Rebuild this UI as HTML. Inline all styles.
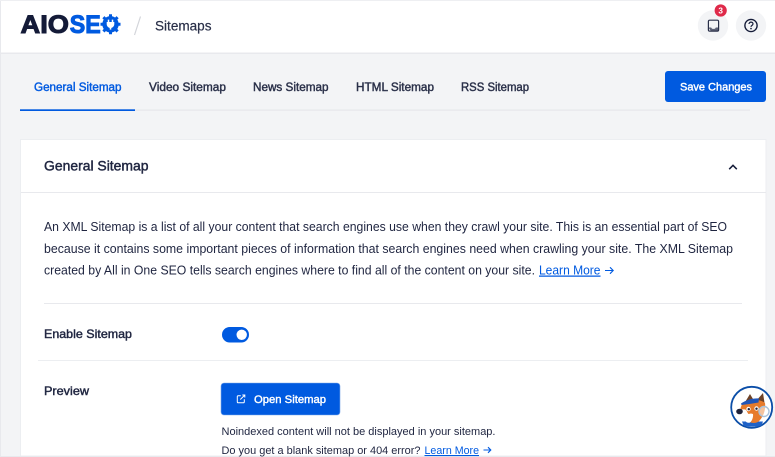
<!DOCTYPE html>
<html lang="en"><head><meta charset="utf-8"><title>Sitemaps</title>
<style>
html,body{margin:0;padding:0;width:775px;height:457px;overflow:hidden;background:#f3f4f6}
svg{display:block}
text{font-family:"Liberation Sans",sans-serif;fill:#141b38}
.b{font-weight:700}
.t{font-size:11.5px;fill:#2a3049;stroke:#2a3049;stroke-width:.42}
.p{font-size:12.5px;fill:#1f2540}
.s{font-size:10.8px;fill:#1f2540}
.l{fill:#005ae0;text-decoration:underline}
.a{fill:none;stroke:#005ae0;stroke-width:1.1}
</style></head><body>
<svg width="775" height="457" viewBox="0 0 775 457" xmlns="http://www.w3.org/2000/svg">
<rect width="775" height="457" fill="#f3f4f6"/>
<rect x="0" y="0" width="1" height="457" fill="#e8e9ed"/>
<!-- header -->
<rect x="1" y="1" width="774" height="52" fill="#fff"/>
<rect x="0" y="0" width="775" height="1" fill="#eeeff2"/>
<rect x="0" y="52.5" width="775" height="1.5" fill="#e8e9ed"/>
<text x="20.5" y="33" font-size="25" class="b" stroke="#141b38" stroke-width="1" textLength="48.5" lengthAdjust="spacingAndGlyphs">AIO</text>
<text x="69.8" y="33" font-size="25" class="b" style="fill:#005ae0" stroke="#005ae0" stroke-width="1" textLength="31" lengthAdjust="spacingAndGlyphs">SE</text>
<circle cx="110.5" cy="24.3" r="8.2" fill="#005ae0"/>
<path d="M110.5 14.3v3M110.5 31.3v3M100.500 24.3h3M117.500 24.3h3M103.400 17.200l2 2M115.600 29.400l2 2M117.600 17.200l-2 2M105.400 29.400l-2 2" stroke="#005ae0" stroke-width="3"/>
<path d="M108.500 19.600v2.400M112.500 19.600v2.400" stroke="#fff" stroke-width="1.500"/>
<path d="M106.700 22h7.600v2.200a3.800 3.800 0 0 1-7.600 0z" fill="#fff"/>
<path d="M110.500 27v2.600" stroke="#fff" stroke-width="1.600"/>
<path d="M140.500 16.500 134.500 35" stroke="#d3d5da" stroke-width="1.200"/>
<text x="155" y="30.500" font-size="13.500" textLength="56.500" lengthAdjust="spacingAndGlyphs" stroke="#2a3049" stroke-width=".2" style="fill:#2a3049">Sitemaps</text>
<!-- header buttons -->
<circle cx="713" cy="25.500" r="15.200" fill="#f3f4f6"/>
<circle cx="751" cy="25.500" r="15.200" fill="#f3f4f6"/>
<rect x="708.400" y="20.200" width="10.200" height="11" rx="1.300" fill="none" stroke="#2a3049" stroke-width="1.200"/>
<path d="M708.400 27.500h2.800c.3 1 1.100 1.400 2.300 1.400s2-.4 2.300-1.400h2.800v2.900a1 1 0 0 1-1 1h-6.200a1 1 0 0 1-1-1z" fill="#2a3049" fill-opacity=".75"/>
<circle cx="720.700" cy="10.500" r="6.100" fill="#df2a4a"/>
<text x="720.700" y="13.400" font-size="8.200" class="b" text-anchor="middle" style="fill:#fff">3</text>
<circle cx="751" cy="25.500" r="6.100" fill="none" stroke="#141b38" stroke-width="1.400"/>
<path d="M749 24c0-1.100.9-1.900 2-1.900s2 .8 2 1.800c0 1.500-2 1.500-2 3" fill="none" stroke="#141b38" stroke-width="1.200"/>
<circle cx="751" cy="28.600" r=".8" fill="#141b38"/>
<!-- tabs -->
<rect x="20" y="109.500" width="730" height="1.200" fill="#e5e7eb"/>
<rect x="20" y="109.300" width="115" height="1.700" fill="#005ae0"/>
<text x="34" y="91" class="t" textLength="87.500" lengthAdjust="spacingAndGlyphs" style="fill:#005ae0;stroke:#005ae0">General Sitemap</text>
<text x="149" y="91" class="t" textLength="77" lengthAdjust="spacingAndGlyphs">Video Sitemap</text>
<text x="253" y="91" class="t" textLength="75.500" lengthAdjust="spacingAndGlyphs">News Sitemap</text>
<text x="356" y="91" class="t" textLength="78" lengthAdjust="spacingAndGlyphs">HTML Sitemap</text>
<text x="461" y="91" class="t" textLength="68" lengthAdjust="spacingAndGlyphs">RSS Sitemap</text>
<rect x="665" y="71" width="101" height="31" rx="3" fill="#005ae0"/>
<text x="680" y="90.500" font-size="11" stroke="#fff" stroke-width=".4" textLength="72" lengthAdjust="spacingAndGlyphs" style="fill:#fff">Save Changes</text>
<!-- card -->
<rect x="20.500" y="139.500" width="745.500" height="316.500" fill="#fff" stroke="#eceef1"/>
<rect x="0" y="456" width="775" height="1" fill="#e8e9ed"/>
<rect x="21" y="192" width="745" height="1" fill="#e8e9ed"/>
<text x="44" y="170.500" font-size="14" stroke="#1f2540" stroke-width=".45" textLength="104.500" lengthAdjust="spacingAndGlyphs" style="fill:#1f2540">General Sitemap</text>
<path d="M729.200 169.200 733 165.300l3.800 3.900" fill="none" stroke="#141b38" stroke-width="1.500"/>
<text x="44" y="231" class="p" textLength="683" lengthAdjust="spacingAndGlyphs">An XML Sitemap is a list of all your content that search engines use when they crawl your site. This is an essential part of SEO</text>
<text x="44" y="253" class="p" textLength="689" lengthAdjust="spacingAndGlyphs">because it contains some important pieces of information that search engines need when crawling your site. The XML Sitemap</text>
<text x="44" y="274.500" class="p" textLength="491" lengthAdjust="spacingAndGlyphs">created by All in One SEO tells search engines where to find all of the content on your site.</text>
<text x="539" y="274.500" class="p l" textLength="61.500" lengthAdjust="spacingAndGlyphs">Learn More</text>
<path class="a" d="M605 270.500h8M610 267.300l3.200 3.200-3.200 3.200"/>
<rect x="44" y="303" width="698" height="1" fill="#e8e9ed"/>
<text x="44" y="338" font-size="11.800" stroke="#1f2540" stroke-width=".42" textLength="88" lengthAdjust="spacingAndGlyphs" style="fill:#1f2540">Enable Sitemap</text>
<rect x="222" y="327" width="27" height="15.500" rx="7.750" fill="#005ae0"/>
<circle cx="241.700" cy="334.800" r="5.200" fill="#fff"/>
<rect x="38" y="360" width="710" height="1" fill="#eceef1"/>
<text x="44" y="395" font-size="11.800" stroke="#1f2540" stroke-width=".42" textLength="45" lengthAdjust="spacingAndGlyphs" style="fill:#1f2540">Preview</text>
<rect x="221" y="383" width="119" height="32" rx="3" fill="#005ae0" stroke="#7fa9ea" stroke-width=".6"/>
<path d="M240.800 395.800h-2.600a.9.9 0 0 0-.9.9v5.200a.9.9 0 0 0 .9.9h5.200a.9.9 0 0 0 .9-.9v-2.600M240.300 399.500l4.200-4.200M242.300 395h2.500v2.500" fill="none" stroke="#fff" stroke-width="1"/>
<text x="254" y="403" font-size="11" stroke="#fff" stroke-width=".4" textLength="72" lengthAdjust="spacingAndGlyphs" style="fill:#fff">Open Sitemap</text>
<text x="221.500" y="435" class="s" textLength="274" lengthAdjust="spacingAndGlyphs">Noindexed content will not be displayed in your sitemap.</text>
<text x="221.500" y="454" class="s" textLength="199" lengthAdjust="spacingAndGlyphs">Do you get a blank sitemap or 404 error?</text>
<text x="424.500" y="454" class="s l" textLength="54.500" lengthAdjust="spacingAndGlyphs">Learn More</text>
<path class="a" d="M483.500 450h7M488 447.200l2.800 2.800-2.800 2.800"/>
<!-- mascot -->
<circle cx="751.700" cy="407.300" r="20.500" fill="#fff" stroke="#0b4ea8" stroke-width="1.800"/>
<path d="M742 421.500h21l-1.500 4c-5 1.500-13 1.500-18 0z" fill="#1e62c8"/>
<path d="M744.500 403l5.500-9 4.500 7.500zM756 401l7-8 2 13z" fill="#6d4227"/>
<path d="M742 404c6-5 17-6 23-1 1 7-2 15-7 19-4 2-9 1-12-3-2-1-5-3-6-6 0-4 1-6 2-9z" fill="#e77b2c"/>
<path d="M737 413c1-3 5-4 8-3.500 2 .5 2 3 3.500 4.500l2.500-.5 2 .5c.5 3-1 7-3 8.500-3 1-5-1-6-4-3 0-6-2-7-5.500z" fill="#fff"/>
<path d="M741 403.500c5-3.500 12-5.500 18-5l-.5 4-9 1.500-8 1z" fill="#2156b8"/>
<ellipse cx="739.500" cy="411.500" rx="3.300" ry="2.800" fill="#20233a"/>
<circle cx="748.500" cy="409" r="2.200" fill="#fff"/><circle cx="748.800" cy="409.200" r="1.200" fill="#20233a"/>
<circle cx="756.500" cy="408.500" r="2.200" fill="#fff"/><circle cx="756.500" cy="408.700" r="1.200" fill="#20233a"/>
<circle cx="764" cy="411.500" r="5" fill="#fff" fill-opacity=".55" stroke="#a9c3dc" stroke-width="1.400"/>
</svg>
</body></html>
